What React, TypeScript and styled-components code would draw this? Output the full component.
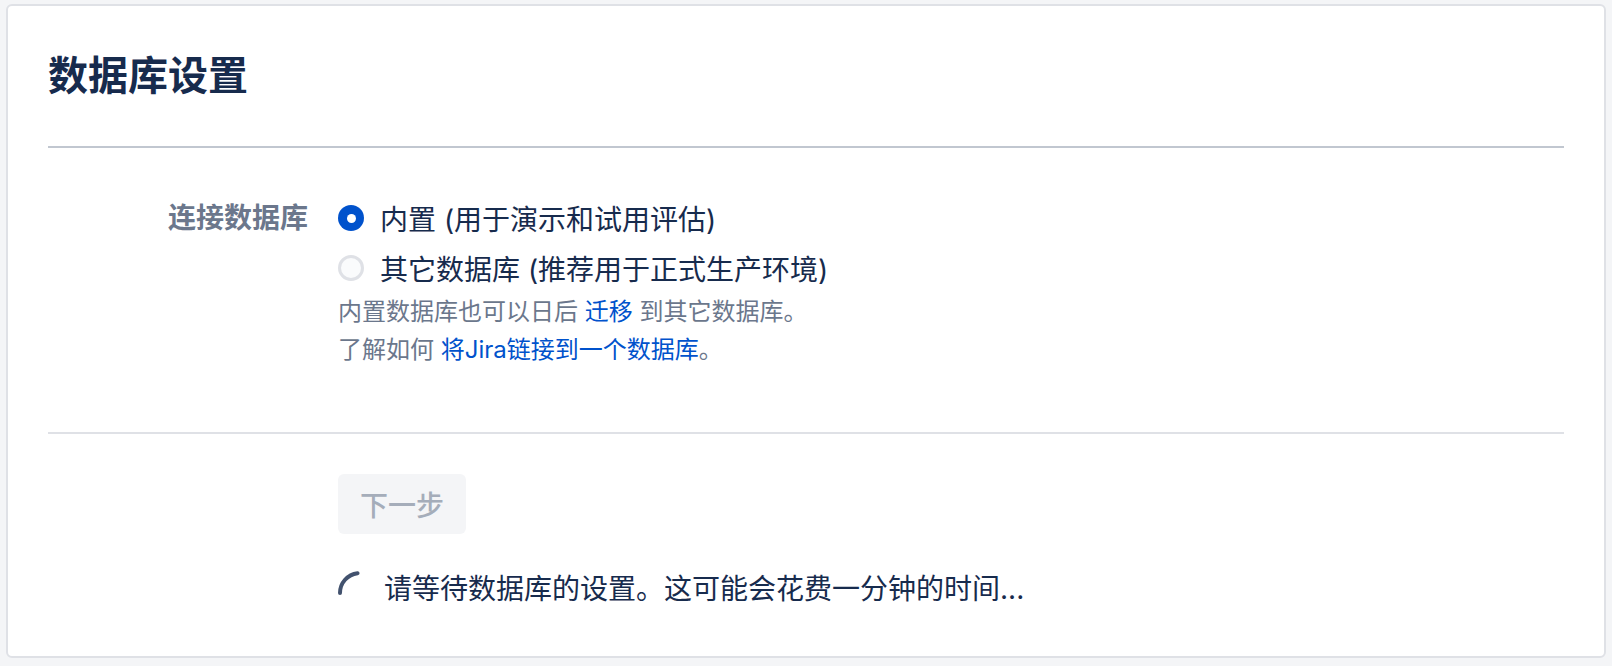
import styled, { createGlobalStyle } from 'styled-components';

const GlobalStyle = createGlobalStyle`
  body {
    margin: 0;
    padding: 4px 6px 8px;
    background-color: #f4f5f7;
    font-family: Inter, "Noto Sans CJK SC", sans-serif;
    color: #172b4d;
  }
`;

const Card = styled.div`
  box-sizing: border-box;
  height: 654px;
  background-color: #fff;
  border: 2px solid #dfe1e6;
  border-radius: 6px;
  padding: 46px 40px 0;
  display: flex;
  flex-direction: column;
`;

const Title = styled.h2`
  margin: 0;
  font-size: 40px;
  line-height: 48px;
  font-weight: 700;
  color: #172b4d;
`;

const Divider = styled.div<{ $light?: boolean; $gap: number }>`
  height: 2px;
  margin-top: ${(p) => p.$gap}px;
  background-color: ${(p) => (p.$light ? '#dfe1e6' : '#c1c7d0')};
`;

const FormSection = styled.div`
  display: grid;
  grid-template-columns: 260px 1fr;
  column-gap: 30px;
  padding-top: 50px;
`;

const FieldLabel = styled.div`
  text-align: right;
  font-size: 28px;
  line-height: 40px;
  font-weight: 600;
  color: #6b778c;
`;

const Controls = styled.div`
  display: flex;
  flex-direction: column;
  gap: 10px;
`;

const RadioRow = styled.label`
  display: flex;
  align-items: center;
  gap: 16px;
  height: 40px;
  font-size: 28px;
  color: #172b4d;
`;

const RadioDot = styled.span<{ $checked?: boolean }>`
  box-sizing: border-box;
  width: 26px;
  height: 26px;
  border-radius: 50%;
  flex-shrink: 0;
  display: flex;
  align-items: center;
  justify-content: center;
  background-color: ${(p) => (p.$checked ? '#0052cc' : '#fafbfc')};
  border: ${(p) => (p.$checked ? 'none' : '3px solid #dfe1e6')};

  &::after {
    content: '';
    display: ${(p) => (p.$checked ? 'block' : 'none')};
    width: 9px;
    height: 9px;
    border-radius: 50%;
    background-color: #fff;
  }
`;

const HelpText = styled.div`
  margin-top: -5px;
  font-size: 24px;
  line-height: 38px;
  color: #6b778c;
`;

const Link = styled.a`
  color: #0052cc;
  text-decoration: none;
`;

const Footer = styled.div`
  display: flex;
  flex-direction: column;
  align-items: flex-start;
  padding: 40px 0 0 290px;
`;

const Button = styled.button`
  height: 60px;
  padding: 0 22px;
  border: none;
  border-radius: 6px;
  background-color: #f4f5f7;
  color: #a5adba;
  font-family: inherit;
  font-size: 28px;
  font-weight: 500;
  cursor: not-allowed;
`;

const Waiting = styled.div`
  display: flex;
  align-items: center;
  gap: 6px;
  margin-top: 33px;
  height: 40px;
  font-size: 28px;
  color: #172b4d;
`;

const Spinner = () => (
  <svg width="40" height="40" viewBox="0 0 40 40">
    <path
      d="M 2 26 A 20 20 0 0 1 19.56 6.15"
      fill="none"
      stroke="#42526e"
      strokeWidth="4"
      strokeLinecap="round"
    />
  </svg>
);

const App = () => {
  return (
    <>
      <GlobalStyle />
      <Card>
        <Title>数据库设置</Title>
        <Divider $gap={46} />
        <FormSection>
          <FieldLabel>连接数据库</FieldLabel>
          <Controls>
            <RadioRow>
              <RadioDot $checked />
              内置 (用于演示和试用评估)
            </RadioRow>
            <RadioRow>
              <RadioDot />
              其它数据库 (推荐用于正式生产环境)
            </RadioRow>
            <HelpText>
              <div>
                内置数据库也可以日后 <Link href="#">迁移</Link> 到其它数据库。
              </div>
              <div>
                了解如何 <Link href="#">将Jira链接到一个数据库</Link>。
              </div>
            </HelpText>
          </Controls>
        </FormSection>
        <Divider $light $gap={63} />
        <Footer>
          <Button disabled>下一步</Button>
          <Waiting>
            <Spinner />
            请等待数据库的设置。这可能会花费一分钟的时间...
          </Waiting>
        </Footer>
      </Card>
    </>
  );
};

export default App;
